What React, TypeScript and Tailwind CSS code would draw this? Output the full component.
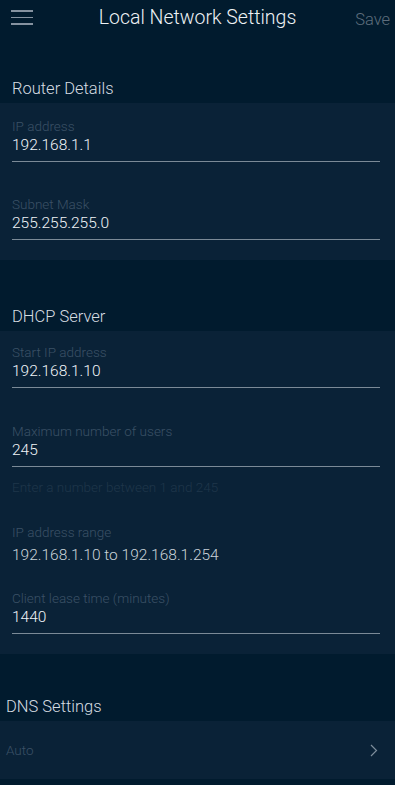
import React from "react";

type FieldProps = {
  label: string;
  value: string;
  underline?: boolean;
};

const Field: React.FC<FieldProps> = ({ label, value, underline = true }) => (
  <div className="px-3">
    <div className="text-[13.5px] leading-[17px] font-light text-[#3b5166]">{label}</div>
    <div
      className={
        underline
          ? "text-[15.5px] leading-[21px] text-[#f0f4f7] pb-[5px] border-b border-[#7b8a97] mr-[3px]"
          : "text-[15.5px] leading-[21px] text-[#c9d2d9] mt-[4px]"
      }
    >
      {value}
    </div>
  </div>
);

const SectionTitle: React.FC<{ children: React.ReactNode; indent?: string }> = ({
  children,
  indent = "px-3",
}) => (
  <div className={`${indent} text-[16.5px] leading-[20px] text-[#d6dde2] pb-[4px]`}>
    {children}
  </div>
);

export default function App() {
  return (
    <div
      className="w-[395px] h-[785px] overflow-hidden bg-[#011b2e] font-light"
      style={{ fontFamily: "Roboto, 'Open Sans', sans-serif" }}
    >
      {/* Header */}
      <div className="relative h-[36px] flex items-center justify-center">
        <div className="absolute left-[11px] top-[10px] flex flex-col gap-[5px]">
          <div className="w-[22px] h-[1.5px] bg-[#8592a0]" />
          <div className="w-[22px] h-[1.5px] bg-[#8592a0]" />
          <div className="w-[22px] h-[1.5px] bg-[#8592a0]" />
        </div>
        <div className="text-[19.5px] text-[#eef2f5]">Local Network Settings</div>
        <div className="absolute right-[5px] top-[8px] text-[16.5px] text-[#5d6d7c]">Save</div>
      </div>

      {/* Router Details */}
      <div className="mt-[43px]">
        <SectionTitle>Router Details</SectionTitle>
        <div className="bg-[#0a2237] pt-[15px] pb-[20px] flex flex-col gap-[34px]">
          <Field label="IP address" value="192.168.1.1" />
          <Field label="Subnet Mask" value="255.255.255.0" />
        </div>
      </div>

      {/* DHCP Server */}
      <div className="mt-[47px]">
        <SectionTitle>DHCP Server</SectionTitle>
        <div className="bg-[#0a2237] pt-[13px] pb-[20px]">
          <Field label="Start IP address" value="192.168.1.10" />
          <div className="mt-[35px]">
            <Field label="Maximum number of users" value="245" />
          </div>
          <div className="px-3 mt-[12px] text-[13.5px] leading-[16px] text-[#1f364a]">
            Enter a number between 1 and 245
          </div>
          <div className="mt-[29px]">
            <Field label="IP address range" value="192.168.1.10 to 192.168.1.254" underline={false} />
          </div>
          <div className="mt-[24px]">
            <Field label="Client lease time (minutes)" value="1440" />
          </div>
        </div>
      </div>

      {/* DNS Settings */}
      <div className="mt-[43px]">
        <SectionTitle indent="px-[6px]">DNS Settings</SectionTitle>
        <div className="bg-[#0a2237] h-[58px] flex items-center justify-between pl-[6px] pr-[17px]">
          <span className="text-[13.5px] text-[#3b5166]">Auto</span>
          <svg width="8" height="13" viewBox="0 0 8 13" fill="none">
            <path d="M1 1l5.5 5.5L1 12" stroke="#7d8d9b" strokeWidth="1.2" />
          </svg>
        </div>
      </div>
    </div>
  );
}
